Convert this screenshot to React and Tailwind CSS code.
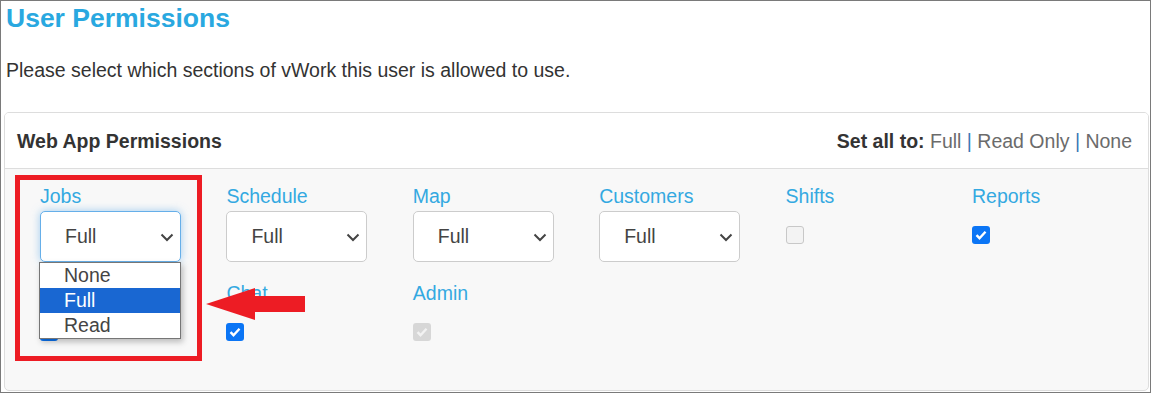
import React from 'react';

const font = "font-['Liberation_Sans',Arial,sans-serif]";

function Chevron() {
  return (
    <svg width="14" height="9" viewBox="0 0 14 9" className="absolute left-[119px] top-[21px]">
      <path d="M1.5 1.5l5.5 5.5 5.5-5.5" fill="none" stroke="#444" strokeWidth="2" />
    </svg>
  );
}

function Select({ focused }) {
  return (
    <div
      className={
        'relative mt-[1px] w-[141px] h-[51px] rounded-[5px] border bg-white pl-[24px] text-[19.5px] leading-[49px] text-[#444] ' +
        (focused ? 'border-[#66afe9] shadow-[0_0_8px_rgba(102,175,233,0.6)]' : 'border-[#cccccc]')
      }
    >
      Full
      <Chevron />
    </div>
  );
}

function Check({ checked, disabled, className = '' }) {
  if (!checked) {
    return <div className={'w-[18px] h-[18px] rounded-[3px] border border-[#c8c8c8] bg-[#f3f3f3] ' + className} />;
  }
  return (
    <div
      className={
        'w-[18px] h-[18px] rounded-[3px] flex items-center justify-center ' +
        (disabled ? 'bg-[#d7d7d7]' : 'bg-[#0b75f5]') +
        ' ' +
        className
      }
    >
      <svg width="12" height="10" viewBox="0 0 12 10">
        <path d="M1.5 5.2l3 3 6-6.5" fill="none" stroke={disabled ? '#f2f2f2' : '#fff'} strokeWidth="2.4" />
      </svg>
    </div>
  );
}

const rowOne = [
  { label: 'Jobs', type: 'select', focused: true },
  { label: 'Schedule', type: 'select' },
  { label: 'Map', type: 'select' },
  { label: 'Customers', type: 'select' },
  { label: 'Shifts', type: 'check', checked: false },
  { label: 'Reports', type: 'check', checked: true },
];

// first label sits under the open dropdown, so it is never seen
const rowTwo = [
  { id: 'hidden', label: '', checked: true },
  { id: 'chat', label: 'Chat', checked: true },
  { id: 'admin', label: 'Admin', checked: true, disabled: true },
];

function Label({ children }) {
  return <div className="h-[27px] leading-[27px] text-[19.5px] text-[#34a9e1]">{children}</div>;
}

export default function App() {
  return (
    <div className={'relative w-[1156px] h-[393px] bg-white overflow-hidden ' + font}>
      <div className="w-[1151px] h-[393px] border border-[#7a7a7a] flex flex-col">
        <h1 className="mt-[1px] pl-[5px] h-[32px] leading-[32px] text-[26.5px] font-bold text-[#29a8e0]">
          User Permissions
        </h1>
        <p className="mt-[22px] pl-[5px] h-[28px] leading-[28px] text-[19.5px] text-[#333]">
          Please select which sections of vWork this user is allowed to use.
        </p>

        <div className="mt-[28px] ml-[3px] w-[1145px] h-[279px] rounded-[5px] border border-[#dddddd] overflow-hidden bg-[#f8f8f8]">
          <div className="h-[56px] pt-[2px] bg-white border-b border-[#dddddd] flex items-center justify-between pl-[12px] pr-[16px] text-[19.5px]">
            <span className="font-bold text-[#333]">Web App Permissions</span>
            <span>
              <span className="font-bold text-[#333]">Set all to: </span>
              <span className="text-[#6b6b6b]">Full</span>
              <span className="text-[#3a78b5]"> | </span>
              <span className="text-[#6b6b6b]">Read Only</span>
              <span className="text-[#3a78b5]"> | </span>
              <span className="text-[#6b6b6b]">None</span>
            </span>
          </div>

          <div className="pl-[35px] pt-[14px]">
            <div className="grid grid-cols-[repeat(6,186.4px)]">
              {rowOne.map((item) => (
                <div key={item.label} className="relative">
                  <Label>{item.label}</Label>
                  {item.type === 'select' ? (
                    <Select focused={item.focused} />
                  ) : (
                    <Check checked={item.checked} className="mt-[16px]" />
                  )}
                  {item.focused && (
                    <div className="absolute left-[-1px] top-[79px] z-10 w-[142px] border border-[#767676] bg-white text-[19.5px] shadow-[2px_3px_6px_rgba(0,0,0,0.25)]">
                      <div className="h-[25px] leading-[25px] pl-[24px] text-[#444]">None</div>
                      <div className="h-[25px] leading-[25px] pl-[24px] bg-[#1967d2] text-white">Full</div>
                      <div className="h-[25px] leading-[25px] pl-[24px] text-[#444]">Read</div>
                    </div>
                  )}
                </div>
              ))}
            </div>

            <div className="mt-[18px] grid grid-cols-[repeat(6,186.4px)]">
              {rowTwo.map((item) => (
                <div key={item.id}>
                  <Label>{item.label}</Label>
                  <Check checked={item.checked} disabled={item.disabled} className="mt-[16px]" />
                </div>
              ))}
            </div>
          </div>
        </div>
      </div>

      {/* annotation */}
      <div className="absolute left-[15px] top-[175px] w-[187px] h-[186px] border-[5px] border-[#ed1c24] z-20" />
      <svg width="110" height="40" viewBox="0 0 110 40" className="absolute left-[200px] top-[284px] z-20">
        <polygon points="6,20 55,4 55,12 105,12 105,28 55,28 55,36" fill="#ed1c24" />
      </svg>
    </div>
  );
}
